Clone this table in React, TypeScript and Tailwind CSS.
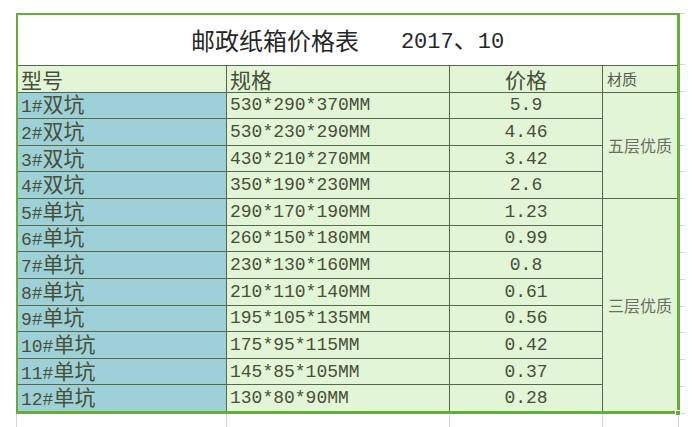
import React from "react";

const rows: [string, string, string][] = [
  ["1#双坑", "530*290*370MM", "5.9"],
  ["2#双坑", "530*230*290MM", "4.46"],
  ["3#双坑", "430*210*270MM", "3.42"],
  ["4#双坑", "350*190*230MM", "2.6"],
  ["5#单坑", "290*170*190MM", "1.23"],
  ["6#单坑", "260*150*180MM", "0.99"],
  ["7#单坑", "230*130*160MM", "0.8"],
  ["8#单坑", "210*110*140MM", "0.61"],
  ["9#单坑", "195*105*135MM", "0.56"],
  ["10#单坑", "175*95*115MM", "0.42"],
  ["11#单坑", "145*85*105MM", "0.37"],
  ["12#单坑", "130*80*90MM", "0.28"],
];

const mono = { fontFamily: '"Liberation Mono", "Noto Sans CJK SC", monospace' };
const cjk = { fontFamily: '"Noto Sans CJK SC", sans-serif' };

function Mixed({ text, cjkClass, monoClass }: { text: string; cjkClass: string; monoClass: string }) {
  const parts = text.split(/([\u3000-\u9fff]+)/).filter((p) => p.length > 0);
  return (
    <>
      {parts.map((p, i) =>
        /[\u3000-\u9fff]/.test(p) ? (
          <span key={i} className={cjkClass} style={cjk}>
            {p}
          </span>
        ) : (
          <span key={i} className={monoClass} style={mono}>
            {p}
          </span>
        )
      )}
    </>
  );
}

export default function App() {
  return (
    <div className="w-[692px] h-[427px] bg-white overflow-hidden pt-[13px] pl-[16px] relative">
      <div className="flex">
        <div className="w-[664px] h-[401px] border-l-2 border-t-2 border-r-[3px] border-b-[3px] border-[#64ad38]">
          <div className="grid grid-cols-[208px_222px_152px_74px] grid-rows-[50px_repeat(13,minmax(0,1fr))] gap-px bg-[#56694c] h-full text-[#474f38] leading-[22px]">
            <div className="col-span-4 bg-white flex items-center justify-center text-[#262626] leading-[30px]">
              <span className="flex items-baseline">
                <Mixed text="邮政纸箱价格表" cjkClass="text-[24px]" monoClass="text-[22px]" />
              </span>
              <span className="ml-[42px] flex items-baseline">
                <Mixed text="2017、10" cjkClass="text-[24px]" monoClass="text-[22px]" />
              </span>
            </div>
            <div className="bg-[#e3f5d7] flex items-center pl-[3px]">
              <span className="text-[21px]" style={cjk}>型号</span>
            </div>
            <div className="bg-[#e3f5d7] flex items-center pl-[3px]">
              <span className="text-[21px]" style={cjk}>规格</span>
            </div>
            <div className="bg-[#e3f5d7] flex items-center justify-center">
              <span className="text-[21px]" style={cjk}>价格</span>
            </div>
            <div className="bg-[#e3f5d7] flex items-center pl-[4px] text-[#555a4c]">
              <span className="text-[15px]" style={cjk}>材质</span>
            </div>
            <div className="col-start-4 row-start-3 row-span-4 bg-[#e3f5d7] flex items-center justify-center text-[#6b6e60]">
              <span className="text-[16px]" style={cjk}>五层优质</span>
            </div>
            <div className="col-start-4 row-start-7 row-span-8 bg-[#e3f5d7] flex items-center justify-center text-[#6b6e60]">
              <span className="text-[16px]" style={cjk}>三层优质</span>
            </div>
            {rows.map(([name, spec, price]) => (
              <React.Fragment key={name}>
                <div className="bg-[#9dd1d7] flex items-center pl-[3px] whitespace-nowrap">
                  <span className="leading-[20px]">
                    <Mixed text={name} cjkClass="text-[21px]" monoClass="text-[18px]" />
                  </span>
                </div>
                <div className="bg-[#e3f5d7] flex items-center pl-[3px] whitespace-nowrap">
                  <span className="text-[18px]" style={mono}>{spec}</span>
                </div>
                <div className="bg-[#e3f5d7] flex items-center justify-center whitespace-nowrap">
                  <span className="text-[18px]" style={mono}>{price}</span>
                </div>
              </React.Fragment>
            ))}
          </div>
        </div>
        <div className="w-[5px] h-[401px] grid grid-rows-[52px_repeat(13,minmax(0,1fr))]">
          {Array.from({ length: 14 }).map((_, i) => (
            <div key={i} className={i === 0 ? "border-t border-b border-[#d6d6d6]" : "border-b border-[#d6d6d6]"} />
          ))}
        </div>
      </div>
      <div className="flex h-[13px]">
        <div className="w-[210px] border-l border-[#d6d6d6]" />
        <div className="w-[223px] border-l border-[#d6d6d6]" />
        <div className="w-[153px] border-l border-[#d6d6d6]" />
        <div className="w-[76px] border-l border-[#d6d6d6]" />
        <div className="w-[2px] border-l border-[#d6d6d6]" />
      </div>
      <div className="absolute left-[675px] top-[410px] w-[6px] h-[6px] bg-[#64ad38] border border-white" />
    </div>
  );
}
